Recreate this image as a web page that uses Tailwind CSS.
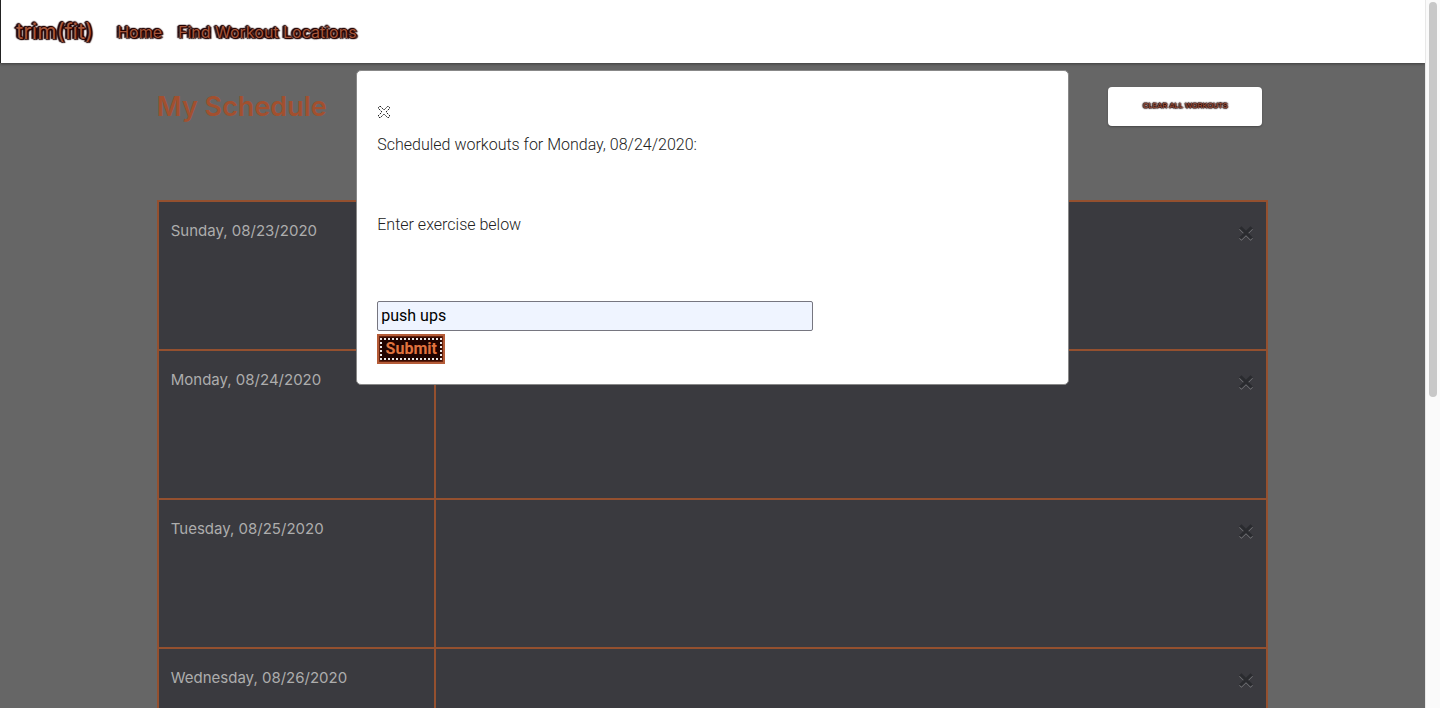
<!DOCTYPE html>
<html lang="en">
<head>
<meta charset="utf-8">
<meta name="viewport" content="width=device-width, initial-scale=1">
<title>trim(fit)</title>
<script src="https://cdn.jsdelivr.net/npm/@tailwindcss/browser@4"></script>
</head>
<body class="flex h-screen overflow-hidden bg-[#666] font-['Inter',sans-serif]">
<svg class="hidden" aria-hidden="true">
  <symbol id="cross" viewBox="0 0 14 14"><path d="M3 1 L7 5 L11 1 L13 3 L9 7 L13 11 L11 13 L7 9 L3 13 L1 11 L5 7 L1 3 Z"/></symbol>
</svg>
<div class="relative flex min-w-0 flex-1 flex-col overflow-hidden">
  <nav class="flex h-[63px] shrink-0 items-center border-l border-[#222] bg-white pl-[15px] text-[#a5563b] shadow-[0_1px_3px_rgba(0,0,0,0.4)] [text-shadow:0_0_2px_#200,1px_0_1px_#200,-2px_0_1px_#200,0_1px_1px_#200,0_-1px_1px_#200,2px_1px_1px_#200,-1px_-1px_1px_#200]">
    <a href="#" class="mr-6 text-[22px]">trim(fit)</a>
    <a href="#" class="mr-4 text-base">Home</a>
    <a href="#" class="text-base">Find Workout Locations</a>
  </nav>
  <main class="mx-auto min-h-0 w-[78%] overflow-hidden">
    <header class="flex h-[137px] items-start justify-between pt-6 pr-[6px]">
      <h1 class="text-[27px] leading-10 font-semibold text-[#a2502f]">My Schedule</h1>
      <button type="button" class="flex h-[39px] w-[154px] items-center justify-center rounded bg-white pb-[2px] font-['Roboto',sans-serif] text-[8px] text-[#a5563b] shadow-[0_1px_2px_rgba(0,0,0,0.3)] [text-shadow:0_0_2px_#200,1px_0_1px_#200,-1px_0_1px_#200,0_1px_1px_#200,0_-1px_1px_#200]">CLEAR ALL WORKOUTS</button>
    </header>
    <table class="w-full table-fixed border-collapse bg-[#3a3a3f] text-left text-[15px] text-[#adadad]">
      <tbody>
        <tr class="h-[149px]">
          <th scope="row" class="w-1/4 border-2 border-[#94502f] px-3 pt-[18px] align-top font-normal">Sunday, 08/23/2020</th>
          <td class="border-2 border-[#94502f] px-3 pt-[23px] align-top"><button type="button" aria-label="Clear Sunday" class="ml-auto block"><svg class="h-4 w-4 fill-[#2a2b2f] drop-shadow-[0_1px_0_#77777b]"><use href="#cross"/></svg></button></td>
        </tr>
        <tr class="h-[149px]">
          <th scope="row" class="border-2 border-[#94502f] px-3 pt-[18px] align-top font-normal">Monday, 08/24/2020</th>
          <td class="border-2 border-[#94502f] px-3 pt-[23px] align-top"><button type="button" aria-label="Clear Monday" class="ml-auto block"><svg class="h-4 w-4 fill-[#2a2b2f] drop-shadow-[0_1px_0_#77777b]"><use href="#cross"/></svg></button></td>
        </tr>
        <tr class="h-[149px]">
          <th scope="row" class="border-2 border-[#94502f] px-3 pt-[18px] align-top font-normal">Tuesday, 08/25/2020</th>
          <td class="border-2 border-[#94502f] px-3 pt-[23px] align-top"><button type="button" aria-label="Clear Tuesday" class="ml-auto block"><svg class="h-4 w-4 fill-[#2a2b2f] drop-shadow-[0_1px_0_#77777b]"><use href="#cross"/></svg></button></td>
        </tr>
        <tr class="h-[149px]">
          <th scope="row" class="border-2 border-[#94502f] px-3 pt-[18px] align-top font-normal">Wednesday, 08/26/2020</th>
          <td class="border-2 border-[#94502f] px-3 pt-[23px] align-top"><button type="button" aria-label="Clear Wednesday" class="ml-auto block"><svg class="h-4 w-4 fill-[#2a2b2f] drop-shadow-[0_1px_0_#77777b]"><use href="#cross"/></svg></button></td>
        </tr>
      </tbody>
    </table>
  </main>
  <!-- Day dialog, over the schedule -->
  <div role="dialog" aria-label="Scheduled workouts" class="absolute inset-x-1/4 top-[70px] rounded-[5px] border border-[#888] bg-white px-5 pt-8 pb-5 font-['Roboto',sans-serif] text-base font-light text-[#222]">
    <button type="button" aria-label="Close" class="block h-[18px]"><svg class="h-[14px] w-[14px] fill-white stroke-[#222] [stroke-dasharray:2_1]"><use href="#cross"/></svg></button>
    <p class="mt-3 mb-14 leading-6">Scheduled workouts for Monday, 08/24/2020:</p>
    <form>
      <label for="exercise" class="mb-16 block leading-6">Enter exercise below</label>
      <input id="exercise" type="text" value="push ups" class="block h-[30px] w-[65%] rounded-xs border border-[#767680] bg-[#eff4ff] px-[3px] pb-[2px] font-normal text-black">
      <button type="button" class="mt-[3px] flex h-[30px] w-[68px] items-center justify-center border-2 border-[#b55c38] bg-[#210400] p-px shadow-[inset_0_0_2px_1px_#7a2b12]"><span class="flex h-[22px] w-full items-center justify-center border-2 border-dotted border-white/90 font-bold text-[#e0733f] [text-shadow:0_0_3px_#210400]">Submit</span></button>
    </form>
  </div>
</div>
<div class="w-[15px] shrink-0 border-l border-[#e8e8e8] bg-[#fafafa] pt-[2px] pl-[3px]" aria-hidden="true">
  <div class="h-[56%] w-2 rounded-full bg-[#c8c8c8]"></div>
</div>
</body>
</html>
